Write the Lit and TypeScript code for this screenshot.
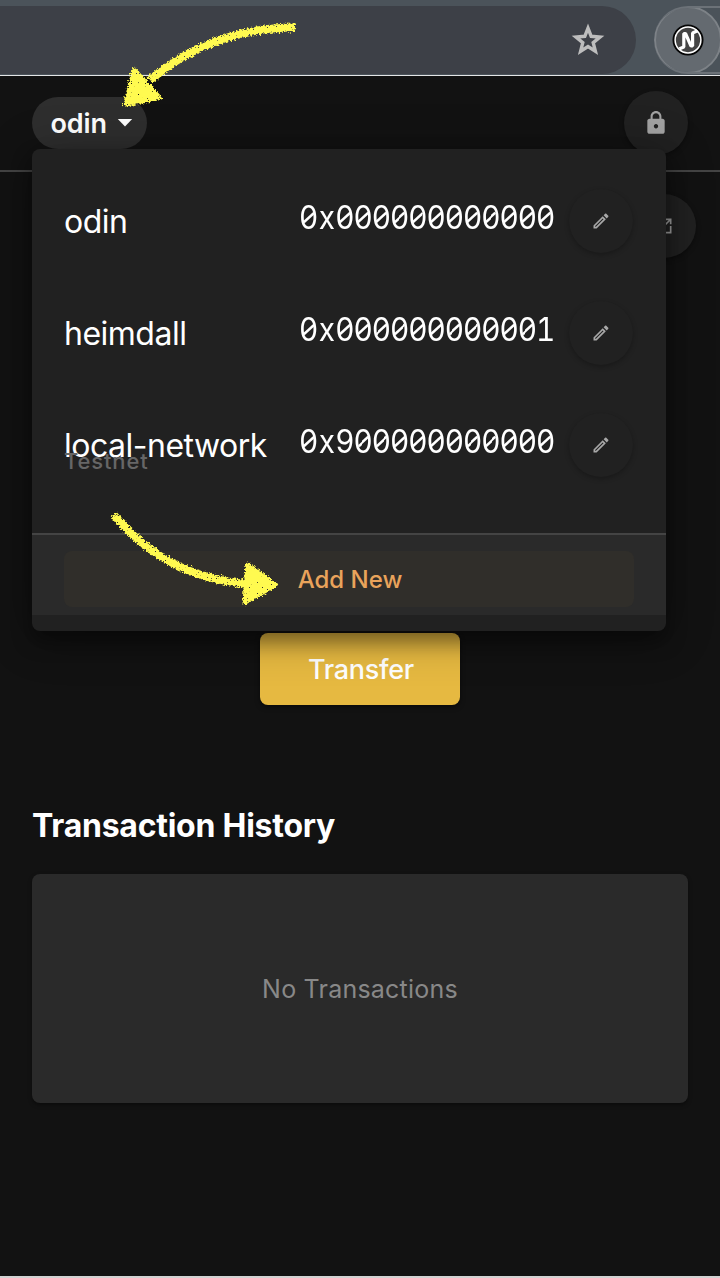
import { LitElement, html, css, svg } from "lit";
import { customElement } from "lit/decorators.js";

const accounts = [
  { name: "odin", address: "0x000000000000", tag: "" },
  { name: "heimdall", address: "0x000000000001", tag: "" },
  { name: "local-network", address: "0x900000000000", tag: "Testnet" },
];

const pencil = svg`<path d="M14.06 9.02l.92.92L5.92 19H5v-.92l9.06-9.06M17.66 3c-.25 0-.51.1-.7.29l-1.83 1.83 3.75 3.75 1.83-1.83c.39-.39.39-1.04 0-1.41l-2.34-2.34c-.2-.2-.45-.29-.71-.29zm-3.6 3.19L3 17.25V21h3.75L17.81 9.94l-3.75-3.75z"/>`;

// Runs of zeros get a slashed background, the narrow "x" gets a full cell.
const spell = (address: string) =>
  address.split(/(0+|x)/).filter(Boolean).map((part) =>
    part === "x" ? html`<span class="ex">x</span>`
    : part[0] === "0" ? html`<span class="zeros">${part}</span>`
    : part);

@customElement("app-root")
export class AppRoot extends LitElement {
  static styles = css`
    :host {
      display: block;
      position: relative;
      width: 720px;
      height: 1278px;
      overflow: hidden;
      background: #121212;
      color: #fff;
      font-family: Inter, sans-serif;
    }
    * { box-sizing: border-box; }
    svg { display: block; }
    button { font: inherit; color: inherit; border: 0; padding: 0; margin: 0; }
    .page { display: flex; flex-direction: column; height: 1278px; border-bottom: 2px solid #d2d2d2; }
    .browser {
      display: flex; justify-content: space-between; align-items: flex-start;
      height: 76px; flex: none; padding-top: 6px; background: #4b535a;
      border-bottom: 1px solid #e3e5e6; overflow: hidden;
    }
    .url {
      width: 636px; height: 68px; background: #3d4047; border-radius: 0 34px 34px 0;
      display: flex; justify-content: flex-end; align-items: center; padding: 0 30px 1px 0;
    }
    .ext {
      width: 66px; height: 68px; overflow: hidden; border-top: 2px solid #6c7278;
      border-bottom: 2px solid #6c7278; border-radius: 34px 0 0 34px; background: #4b535a;
    }
    .ext-disc {
      width: 68px; height: 68px; margin-top: -2px; border-radius: 50%; background: #646a70;
      border: 2px solid #7d8287; display: grid; place-items: center;
    }
    .bar {
      display: flex; justify-content: space-between; align-items: center;
      height: 96px; flex: none; padding: 0 32px; border-bottom: 2px solid #444;
    }
    .picker {
      width: 115px; height: 52px; border-radius: 26px; background: #2e2e2e;
      display: flex; align-items: center; padding-left: 18.5px; gap: 10.5px;
      font-size: 27px; font-weight: 600; letter-spacing: -0.1px;
    }
    .round {
      width: 64px; height: 64px; border-radius: 50%; background: #212121; color: #a2a2a2;
      display: grid; place-items: center; flex: none;
      box-shadow: 0 2px 5px rgba(0, 0, 0, 0.35);
    }
    .wallet { height: 461px; flex: none; padding: 22px 24px 0; display: flex; justify-content: flex-end; }
    .transfer {
      align-self: center; width: 200px; height: 72px; flex: none; border-radius: 8px;
      background: #e6b941; font-size: 27px; font-weight: 500; letter-spacing: -0.3px;
      padding-left: 2px; box-shadow: 0 2px 5px rgba(0, 0, 0, 0.5);
    }
    .title { margin: 101px 0 0 32px; font-size: 32px; line-height: 40px; font-weight: 700; letter-spacing: -0.25px; }
    .empty {
      margin: 28px 32px 0; height: 229px; border-radius: 8px; background: #2a2a2a; color: #888;
      display: grid; place-items: center; font-size: 25px; letter-spacing: 0.22px;
      box-shadow: 0 2px 4px rgba(0, 0, 0, 0.4);
    }
    .menu {
      position: absolute; left: 32px; top: 149px; width: 634px; height: 482px;
      background: #212121; border-radius: 8px; padding-top: 16px;
      box-shadow: 0 10px 20px rgba(0, 0, 0, 0.4), 0 5px 48px rgba(0, 0, 0, 0.3);
    }
    .row { height: 112px; display: grid; grid-template-columns: 234.5px 270.5px 64px; padding: 0 32px; }
    .who { padding-top: 37px; }
    .name { font-size: 32px; line-height: 40px; white-space: nowrap; letter-spacing: -0.5px; }
    .tag {
      margin-top: -17px; font-size: 22px; line-height: 24px; font-weight: 500;
      letter-spacing: 0.85px; color: #666;
    }
    .address {
      padding-top: 33px; font-size: 32px; line-height: 40px; white-space: nowrap;
      letter-spacing: -1.15px; font-feature-settings: "tnum";
      transform: scaleX(0.93); transform-origin: left;
    }
    .ex { display: inline-block; width: 19.5px; text-align: center; }
    .zeros {
      background-image: url("data:image/svg+xml,%3Csvg xmlns='http://www.w3.org/2000/svg' viewBox='0 0 19.6 38.7' preserveAspectRatio='none'%3E%3Cpath d='M5 24L15.700 14.700' stroke='white' stroke-width='2.500'/%3E%3C/svg%3E");
      background-size: 19.6px 100%;
      background-repeat: round no-repeat;
    }
    .edit { margin-top: 24px; color: #a8a8a8; box-shadow: 0 2px 5px rgba(0, 0, 0, 0.25); }
    .list { height: 368px; }
    .foot {
      height: 82px; border-top: 2px solid #444; background: #2a2a2a; padding: 16px 32px 0;
    }
    .add {
      display: block; width: 100%; height: 56px; border-radius: 8px; background: #302e2a;
      color: #e9a35b; font-size: 24px; font-weight: 450; letter-spacing: 0; padding: 1px 0 0 2px;
    }
    .marks { position: absolute; left: 0; top: 0; pointer-events: none; }
  `;

  render() {
    return html`
      <div class="page">
        <div class="browser">
          <div class="url">
            <svg width="36" height="36" viewBox="0 0 36 36" fill="none" stroke="#bdbdbd" stroke-width="3.4"><path d="M18 6.2 21.2 14.3 30 15 23.2 20.600 25.400 29.200 18 24.500 10.600 29.200 12.800 20.600 6 15 14.800 14.300Z"/></svg>
          </div>
          <div class="ext"><div class="ext-disc">
            <svg width="32" height="32" viewBox="0 0 32 32"><circle cx="16" cy="16" r="15.500" fill="#050505"/><circle cx="16" cy="16" r="12.900" fill="#444" stroke="#fff" stroke-width="1.500"/><path d="M7.500 24.800L11.800 23V9.500H13.500L19 22H20.600V9L25.500 6.800" fill="none" stroke="#fff" stroke-width="3.200" stroke-linejoin="bevel"/></svg>
          </div></div>
        </div>
        <header class="bar">
          <button class="picker">odin<svg width="16" height="8" viewBox="0 0 16 8" fill="#fff"><path d="M.8 0h14.400L8 7.500z"/></svg></button>
          <button class="round"><svg width="26" height="26" viewBox="0 0 24 24" fill="currentColor"><path d="M18 8h-1V6c0-2.760-2.240-5-5-5S7 3.240 7 6v2H6c-1.100 0-2 .9-2 2v10c0 1.100.9 2 2 2h12c1.100 0 2-.9 2-2V10c0-1.100-.9-2-2-2zm-6 9c-1.100 0-2-.9-2-2s.9-2 2-2 2 .9 2 2-.9 2-2 2zm3.100-9H8.900V6c0-1.710 1.390-3.100 3.100-3.100s3.100 1.390 3.100 3.100v2z"/></svg></button>
        </header>
        <div class="wallet">
          <button class="round"><svg width="20" height="20" viewBox="0 0 24 24" fill="currentColor"><path d="M19 19H5V5h7V3H3v18h18v-9h-2v7zM14 3v2h3.590l-9.830 9.830 1.410 1.410L19 6.410V10h2V3h-7z"/></svg></button>
        </div>
        <button class="transfer">Transfer</button>
        <h2 class="title">Transaction History</h2>
        <section class="empty">No Transactions</section>
      </div>

      <div class="menu">
        <div class="list">
          ${accounts.map((a) => html`
            <div class="row">
              <div class="who"><div class="name">${a.name}</div>${a.tag ? html`<div class="tag">${a.tag}</div>` : ""}</div>
              <div class="address">${spell(a.address)}</div>
              <button class="round edit"><svg width="20" height="20" viewBox="0 0 24 24" fill="currentColor">${pencil}</svg></button>
            </div>`)}
        </div>
        <div class="foot"><button class="add">Add New</button></div>
      </div>

      <svg class="marks" width="720" height="640" viewBox="0 0 720 640">
        <filter id="chalk" x="-10%" y="-10%" width="120%" height="120%" color-interpolation-filters="sRGB">
          <feTurbulence type="fractalNoise" baseFrequency="0.55" numOctaves="2" seed="4" result="n"/>
          <feDisplacementMap in="SourceGraphic" in2="n" scale="6" xChannelSelector="R" yChannelSelector="G" result="rough"/>
          <feColorMatrix in="n" type="matrix" values="0 0 0 0 1  0 0 0 0 1  0 0 0 0 1  0 0 16 0 -3.2" result="grain"/>
          <feComposite in="rough" in2="grain" operator="in"/>
        </filter>
        <g filter="url(#chalk)" fill="#fffa50" stroke="#fffa50" stroke-linejoin="round">
          <path d="M295 27.500C240 27.500 190 46 150 80" fill="none" stroke-width="8"/>
          <path d="M134 70 159 97.500 126 104Z" stroke-width="5"/>
          <path d="M114 515C147 554 188 579 248 584" fill="none" stroke-width="8"/>
          <path d="M248 565 275 585 245 602Z" stroke-width="5"/>
        </g>
      </svg>
    `;
  }
}
